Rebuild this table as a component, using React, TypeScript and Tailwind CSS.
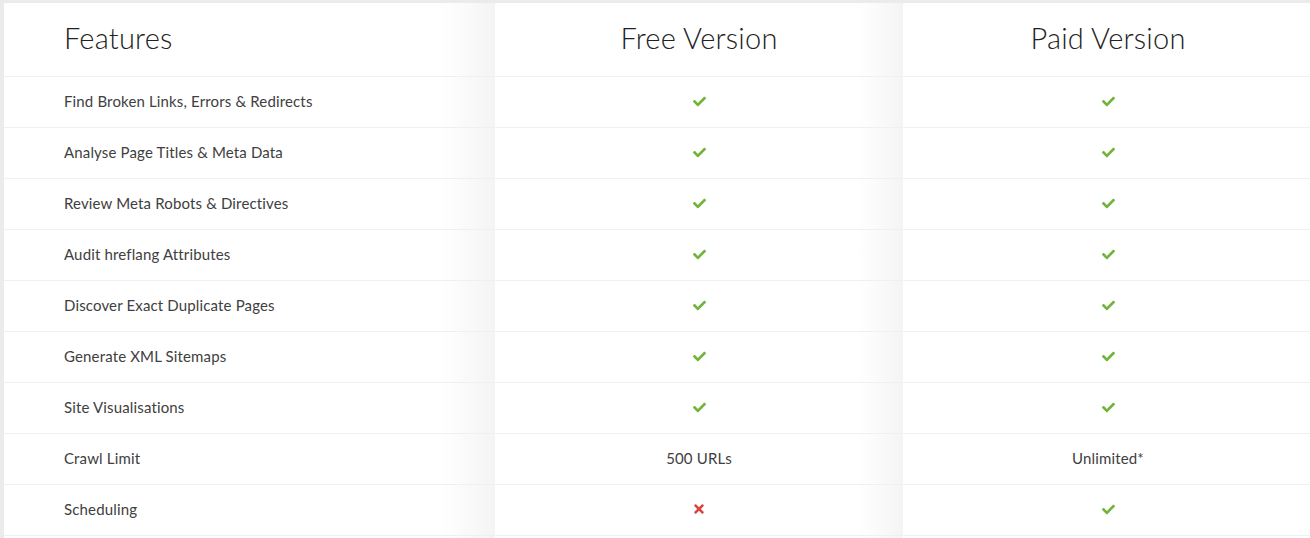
import { FaCheck, FaTimes } from "react-icons/fa";

type Cell = "yes" | "no" | string;

const rows: { feature: string; free: Cell; paid: Cell }[] = [
  { feature: "Find Broken Links, Errors & Redirects", free: "yes", paid: "yes" },
  { feature: "Analyse Page Titles & Meta Data", free: "yes", paid: "yes" },
  { feature: "Review Meta Robots & Directives", free: "yes", paid: "yes" },
  { feature: "Audit hreflang Attributes", free: "yes", paid: "yes" },
  { feature: "Discover Exact Duplicate Pages", free: "yes", paid: "yes" },
  { feature: "Generate XML Sitemaps", free: "yes", paid: "yes" },
  { feature: "Site Visualisations", free: "yes", paid: "yes" },
  { feature: "Crawl Limit", free: "500 URLs", paid: "Unlimited*" },
  { feature: "Scheduling", free: "no", paid: "yes" },
];

const Value = ({ value }: { value: Cell }) => {
  if (value === "yes") return <FaCheck className="text-[#72b33a]" size={13} />;
  if (value === "no") return <FaTimes className="text-[#d9443f]" size={14} />;
  return <span>{value}</span>;
};

export default function App() {
  return (
    <div
      className="min-h-[538px] bg-white border-t-[3px] border-l-4 border-[#ebebeb] text-[#404040] grid grid-cols-[491px_408px_1fr]"
      style={{ fontFamily: "Lato, 'Open Sans', sans-serif" }}
    >
      <div className="bg-linear-to-r from-white from-89% to-[#f4f4f4]">
        <div className="h-[74px] border-b border-[#f0f0f0] pl-[60px] flex items-center">
          <h2 className="text-[29px] font-light text-[#222] pb-[4px] tracking-[0.2px]">Features</h2>
        </div>
        {rows.map((r) => (
          <div key={r.feature} className="h-[51px] border-b border-[#f0f0f0] pl-[60px] pb-[2px] flex items-center text-[15px] tracking-[0.15px]">
            {r.feature}
          </div>
        ))}
      </div>

      <div className="bg-linear-to-r from-white from-89% to-[#f4f4f4]">
        <div className="h-[74px] border-b border-[#f0f0f0] flex items-center justify-center">
          <h2 className="text-[29px] font-light text-[#222] pb-[4px] tracking-[0.2px]">Free Version</h2>
        </div>
        {rows.map((r) => (
          <div key={r.feature} className="h-[51px] border-b border-[#f0f0f0] pb-[2px] flex items-center justify-center text-[15px] tracking-[0.15px]">
            <Value value={r.free} />
          </div>
        ))}
      </div>

      <div>
        <div className="h-[74px] border-b border-[#f0f0f0] pl-[3px] flex items-center justify-center">
          <h2 className="text-[29px] font-light text-[#222] pb-[4px] tracking-[0.2px]">Paid Version</h2>
        </div>
        {rows.map((r) => (
          <div key={r.feature} className="h-[51px] border-b border-[#f0f0f0] pl-[3px] pb-[2px] flex items-center justify-center text-[15px] tracking-[0.15px]">
            <Value value={r.paid} />
          </div>
        ))}
      </div>
    </div>
  );
}
